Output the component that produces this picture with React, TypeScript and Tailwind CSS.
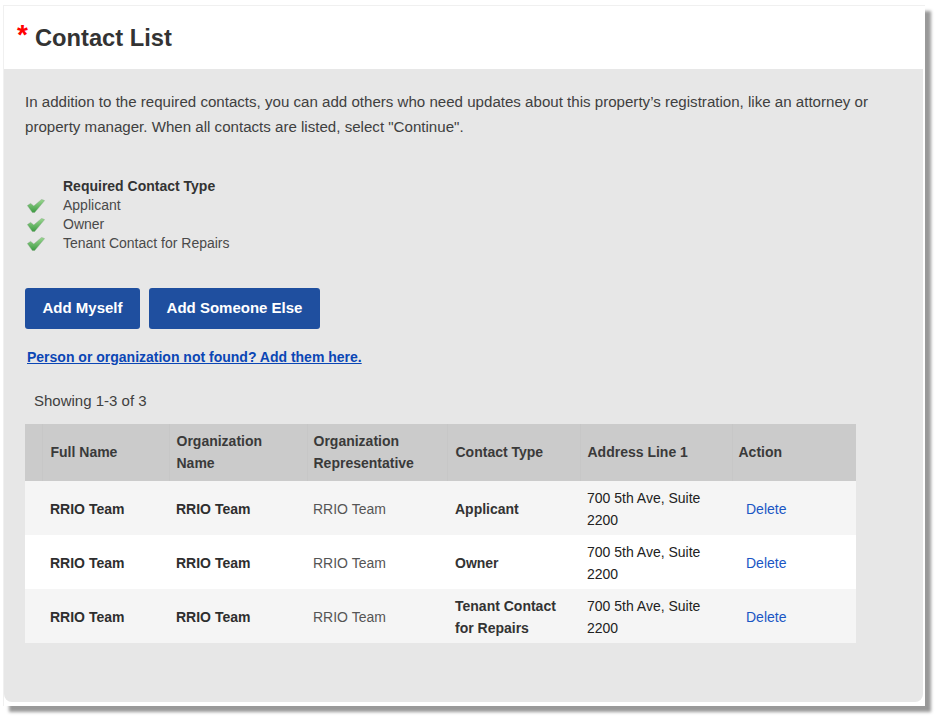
import React from 'react';

const rows = [
  { type: ['Applicant'], bg: 'bg-[#f5f5f5]' },
  { type: ['Owner'], bg: 'bg-white' },
  { type: ['Tenant Contact', 'for Repairs'], bg: 'bg-[#f5f5f5]' },
];

function Check(): React.ReactElement {
  return (
    <svg width="18" height="14" viewBox="0 0 18 14" className="block">
      <defs>
        <linearGradient id="chk" x1="0" y1="0" x2="0" y2="1">
          <stop offset="0" stopColor="#9ad88f" />
          <stop offset="1" stopColor="#3c9a42" />
        </linearGradient>
      </defs>
      <path
        d="M0.4 6.6 L3.6 4.4 L6.8 7 L14.6 0.4 L17.6 1.6 L7.6 13.6 L5.4 13.6 Z"
        fill="url(#chk)"
        stroke="#7a9f7a"
        strokeWidth="0.4"
      />
    </svg>
  );
}

export default function App(): React.ReactElement {
  return (
    <div className="w-[939px] h-[719px] bg-white pt-[5px] pl-[3px] font-['Liberation_Sans',Arial,sans-serif] overflow-hidden">
      <div className="w-[922px] h-[701px] bg-white border-t border-l border-[#f0f0f0] shadow-[6px_6px_3px_rgba(0,0,0,0.4)] pr-[2px] pb-[4px] flex flex-col">
        {/* Title bar */}
        <div className="h-[63px] flex items-start shrink-0">
          <span className="text-[28px] leading-none font-bold text-[#ff0000] ml-[13px] mt-[15px] w-[18px]">*</span>
          <h1 className="text-[23.7px] leading-[28px] font-bold text-[#333333] mt-[18px]">Contact List</h1>
        </div>

        <div className="flex-1 bg-[#e7e7e7] rounded-b-[8px] pl-[21px]">
          <p className="text-[15.1px] leading-[25px] text-[#404040] mt-[20px] w-[870px]">
            In addition to the required contacts, you can add others who need updates about this property’s registration, like an attorney or property manager. When all contacts are listed, select "Continue".
          </p>

          {/* Required contact types */}
          <div className="mt-[38px] flex gap-[18px] text-[14px] leading-[19px] text-[#4a4a4a]">
            <div className="flex flex-col gap-[5px] pt-[22px] pl-[2px]">
              <Check />
              <Check />
              <Check />
            </div>
            <div>
              <div className="font-bold text-[#333333]">Required Contact Type</div>
              <div>Applicant</div>
              <div>Owner</div>
              <div>Tenant Contact for Repairs</div>
            </div>
          </div>

          <div className="mt-[35px] flex gap-[9px]">
            <button className="h-[41px] w-[115px] bg-[#1f4f9f] text-white text-[15px] font-bold rounded-[3px]">Add Myself</button>
            <button className="h-[41px] w-[171px] bg-[#1f4f9f] text-white text-[15px] font-bold rounded-[3px]">Add Someone Else</button>
          </div>

          <a href="#" className="block mt-[19px] ml-[2px] text-[14px] leading-[19px] font-bold text-[#0b46b5] underline">
            Person or organization not found? Add them here.
          </a>

          <div className="mt-[24px] ml-[9px] text-[15px] leading-[19px] text-[#404040]">Showing 1-3 of 3</div>

          <table className="mt-[14px] w-[831px] table-fixed border-collapse text-[14px] leading-[22px]">
            <colgroup>
              <col className="w-[17px]" />
              <col className="w-[127px]" />
              <col className="w-[138px]" />
              <col className="w-[140px]" />
              <col className="w-[133px]" />
              <col className="w-[152px]" />
              <col className="w-[124px]" />
            </colgroup>
            <thead>
              <tr className="h-[57px] bg-[#cbcbcb] text-left text-[#3a3a3a] font-bold">
                <th className="border-r border-[#c7c7c7]"></th>
                <th className="pl-[8px] pb-[2px] border-r border-[#c7c7c7]">Full Name</th>
                <th className="pl-[7px] pb-[2px] border-r border-[#c7c7c7]">Organization<br />Name</th>
                <th className="pl-[6px] pb-[2px] border-r border-[#c7c7c7]">Organization<br />Representative</th>
                <th className="pl-[8px] pb-[2px] border-r border-[#c7c7c7]">Contact Type</th>
                <th className="pl-[7px] pb-[2px] border-r border-[#c7c7c7]">Address Line 1</th>
                <th className="pl-[6px] pb-[2px]">Action</th>
              </tr>
            </thead>
            <tbody>
              {rows.map((r, i) => (
                <tr key={i} className={`h-[54px] ${r.bg}`}>
                  <td></td>
                  <td className="pl-[8px] pt-[2px] font-bold text-[#2e2e2e]">RRIO Team</td>
                  <td className="pl-[7px] pt-[2px] font-bold text-[#2e2e2e]">RRIO Team</td>
                  <td className="pl-[6px] pt-[2px] text-[#555555]">RRIO Team</td>
                  <td className="pl-[8px] pt-[2px] font-bold text-[#333333]">
                    {r.type.map((t) => (
                      <div key={t}>{t}</div>
                    ))}
                  </td>
                  <td className="pl-[7px] pt-[2px] text-[#222222]">700 5th Ave, Suite<br />2200</td>
                  <td className="pl-[14px] pt-[2px]">
                    <a href="#" className="text-[#1a56c4]">Delete</a>
                  </td>
                </tr>
              ))}
            </tbody>
          </table>
        </div>
      </div>
    </div>
  );
}
